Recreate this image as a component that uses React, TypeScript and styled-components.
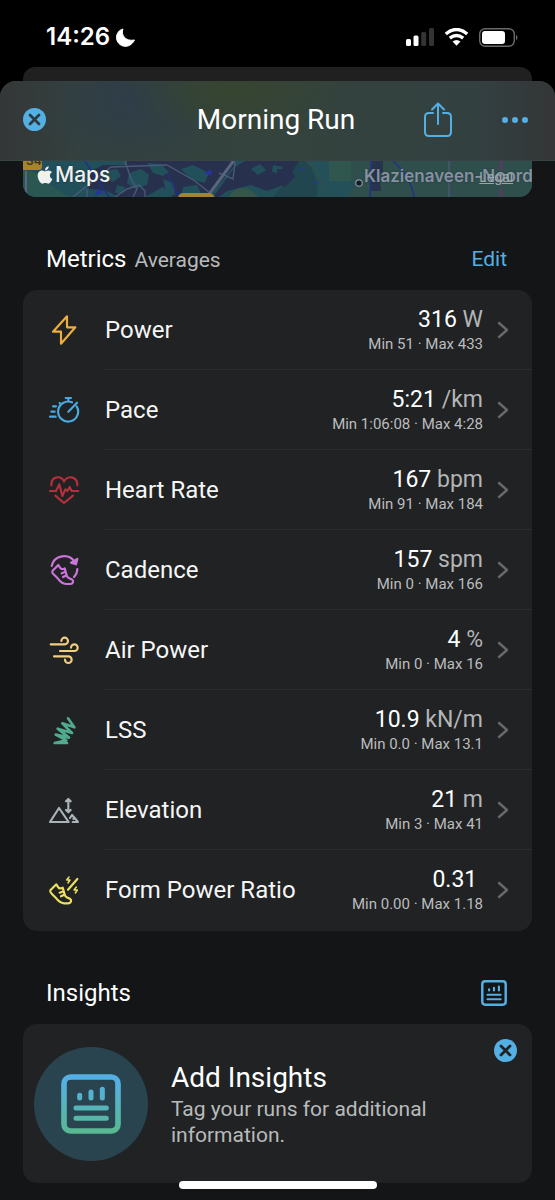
import React from "react";
import styled, { createGlobalStyle } from "styled-components";
import { FaApple } from "react-icons/fa";

const blue = "#54afe3";
const sheetBg = "#131516";
const cardBg = "#202223";
const muted = "#b9babb";

const GlobalStyle = createGlobalStyle`
  * { box-sizing: border-box; }
  body {
    margin: 0;
    background: ${sheetBg};
    color: #fff;
    font-family: Roboto, "Liberation Sans", sans-serif;
  }
  button { font: inherit; color: inherit; background: none; border: 0; padding: 0; cursor: pointer; }
  a { color: inherit; text-decoration: none; }
  h1, h2, h3, p, ul { margin: 0; padding: 0; font-weight: 400; }
  svg { display: block; flex: none; }
`;

const Top = styled.div`
  background: #000;
`;

const StatusBar = styled.div`
  height: 67px;
  padding: 7px 37px 0 46px;
  display: flex;
  align-items: center;
  justify-content: space-between;
  font: 600 24px/30px Inter, sans-serif;
`;

const StatusGroup = styled.div<{ $gap: number }>`
  display: flex;
  align-items: center;
  gap: ${(p) => p.$gap}px;
`;

const BackSheet = styled.div`
  height: 14px;
  margin: 0 23px;
  border-radius: 12px 12px 0 0;
  background: #202020;
`;

const Header = styled.header`
  height: 80px;
  padding: 0 26px 2px 23px;
  display: grid;
  grid-template-columns: 1fr auto 1fr;
  align-items: center;
  border-radius: 16px 16px 0 0;
  border-bottom: 1px solid #3a4343;
  background:
    linear-gradient(90deg, #343737 0%, transparent 14%, transparent 86%, #343637 100%),
    radial-gradient(ellipse 110px 50px at 42% 10%, #36452f 0%, transparent 100%),
    radial-gradient(ellipse 100px 70px at 24% 25%, #2e3d49 0%, transparent 100%),
    linear-gradient(90deg, #33403f 0%, #34433d 50%, #323f42 100%);
`;

const Title = styled.h1`
  font-size: 28px;
  line-height: 36px;
`;

const Actions = styled.div`
  display: flex;
  align-items: center;
  justify-content: flex-end;
  gap: 47px;
`;

const IconButton = styled.button`
  display: flex;
  justify-self: start;
  color: ${blue};
`;

const MapStrip = styled.div`
  position: relative;
  height: 36px;
  margin: 0 23px;
  overflow: hidden;
  border-radius: 0 0 13px 13px;
`;

const MapBrand = styled.div`
  position: absolute;
  top: 0;
  left: 12px;
  display: flex;
  align-items: center;
  color: #f0f2f2;
  font: 500 21px/28px Inter, sans-serif;
  text-shadow: 0 0 2px #1c2a33;
`;

const MapPlace = styled.div`
  position: absolute;
  top: 3px;
  left: 341px;
  color: #8592a2;
  font: 600 17px/24px Inter, sans-serif;
  white-space: nowrap;
  text-shadow: 0 0 2px #26343c;
`;

const MapLegal = styled.a`
  position: absolute;
  top: 7px;
  right: 19px;
  color: #9aa5a8;
  font: 500 13px/18px Inter, sans-serif;
  && { text-decoration: underline; }
`;

const Section = styled.section`
  padding: 48px 23px 0;
`;

const SectionHead = styled.div`
  height: 28px;
  margin-bottom: 17px;
  padding: 0 25px 0 23px;
  display: flex;
  align-items: center;
  justify-content: space-between;
`;

const SectionTitle = styled.h2`
  font-size: 24px;
  line-height: 28px;
`;

const Sub = styled.span`
  margin-left: 8px;
  font-size: 21px;
  color: ${muted};
`;

const Edit = styled.button`
  font-size: 21px;
  line-height: 28px;
  color: ${blue};
`;

const Card = styled.div`
  background: ${cardBg};
  border-radius: 14px;
  overflow: hidden;
`;

const MetricList = styled.ul`
  list-style: none;
  padding-bottom: 1px;
`;

const Row = styled.a`
  display: flex;
  align-items: center;
  gap: 25px;
  padding-left: 25px;
`;

const RowBody = styled.div<{ $last: boolean }>`
  flex: 1;
  height: 80px;
  padding-right: 23px;
  display: flex;
  align-items: center;
  box-shadow: ${(p) => (p.$last ? "none" : "inset 0 -1px #2c2e2f")};
`;

const Name = styled.span`
  flex: 1;
  font-size: 24px;
  line-height: 28px;
  color: #f6f6f6;
`;

const Values = styled.div`
  margin-right: 14px;
  text-align: right;
  font-size: 23px;
  line-height: 28px;
`;

const Unit = styled.span`
  color: #b4b5b6;
`;

const Range = styled.div`
  font-size: 15px;
  line-height: 20px;
  color: #bcbdbe;
`;

const InsightCard = styled(Card)`
  min-height: 159px;
  padding: 0 15px 0 11px;
  display: flex;
  align-items: center;
  gap: 23px;
`;

const Disc = styled.div`
  width: 114px;
  height: 114px;
  flex: none;
  display: grid;
  place-items: center;
  border-radius: 50%;
  background: #29444f;
`;

const InsightText = styled.div`
  flex: 1;
`;

const InsightTitle = styled.h3`
  font-size: 28px;
  line-height: 36px;
`;

const InsightCopy = styled.p`
  max-width: 280px;
  font-size: 21px;
  line-height: 26px;
  color: ${muted};
`;

const Dismiss = styled(IconButton)`
  align-self: flex-start;
  margin-top: 15px;
`;

const Page = styled.main`
  padding-bottom: 17px;
`;

const HomeIndicator = styled.div`
  position: fixed;
  bottom: 11px;
  left: 50%;
  width: 198px;
  height: 8px;
  margin-left: -99px;
  border-radius: 4px;
  background: #fff;
`;

const CloseIcon = ({ cross }: { cross: string }) => (
  <svg width="23" height="23" viewBox="0 0 23 23" aria-hidden="true">
    <circle cx="11.5" cy="11.5" r="11.5" fill={blue} />
    <path d="M7 7l9 9M16 7l-9 9" stroke={cross} strokeWidth="2.8" strokeLinecap="round" />
  </svg>
);

const ReportIcon = ({ size, paint }: { size: number; paint: string }) => (
  <svg width={size} height={size} viewBox="0 0 180 180" fill="none" aria-hidden="true">
    <defs>
      <linearGradient id="report" gradientUnits="userSpaceOnUse" x1="0" y1="0" x2="0" y2="180">
        <stop offset="0.1" stopColor="#54b0e4" />
        <stop offset="1" stopColor="#58b88e" />
      </linearGradient>
    </defs>
    <g stroke={paint} strokeWidth="15" strokeLinecap="round">
      <rect x="9" y="9" width="162" height="162" rx="20" strokeWidth="17" />
      <path d="M56 64v8M90 54v18M124 46v26M45 102h91M45 133h91" />
    </g>
  </svg>
);

const SHOE =
  "M31 33 L13 51 Q11 56 17 61 L29 73 Q41 89 54 90 H66 Q77 89 75 80 Q73 75 64 73 Q58 71 56 64 L50 43 Q41 48 36 41 Z M49 55 L41 58 M53 65 L45 69";

const metricIcons: Record<string, { color: string; art: React.ReactNode }> = {
  Power: { color: "#eead3f", art: <path d="M57 7 L15 53 H39 V89 L82 40 H57 Z" /> },
  Pace: {
    color: "#4aa9e0",
    art: (
      <path d="M53 12h16M61 12v10M61 53L87 26M35 27l4 4M72 25A30 30 0 1 0 86 37M15 37h9M10 53h10M6 68h17" />
    ),
  },
  "Heart Rate": {
    color: "#b5303a",
    art: (
      <path d="M10 34C10 4 40 4 48 23C56 4 88 4 88 34M6 51H24L34 31L43 66L52 46L58 51L65 39L71 51H91M22 65L48 87L75 65" />
    ),
  },
  Cadence: {
    color: "#cb75da",
    art: (
      <>
        <path d="M11 36A38 38 0 0 1 80 24" />
        <path d="M88 15L84 31L69 26Z" fill="#cb75da" />
        <path d="M88 45Q88 58 78 69" />
        <path d={SHOE} />
      </>
    ),
  },
  "Air Power": {
    color: "#f3cd83",
    art: (
      <path d="M8 31H50a10 10 0 1 0-10-10M36 51H79a10 10 0 1 0-10-10M18 67H61a10 10 0 1 1-10 10" />
    ),
  },
  LSS: {
    color: "#50aa8b",
    art: (
      <path strokeWidth="8" d="M57 87H20L55 79L23 62L63 71L29 44L72 57L43 28L79 40L60 13" />
    ),
  },
  Elevation: {
    color: "#a9b4b9",
    art: (
      <path d="M33 42L6 84H62ZM66 72L72 63L90 84H74M76 75L82 73M61 18V51M54 22L61 15L68 22M54 48L61 55L68 48" />
    ),
  },
  "Form Power Ratio": {
    color: "#ecdf63",
    art: (
      <>
        <path d={SHOE} transform="translate(-6 -2)" />
        <path d="M88 15L60 47" />
        <path strokeWidth="4.5" d="M63 9L56 18H66L60 27M85 39L78 48H88L82 57" />
      </>
    ),
  },
};

const MetricIcon = ({ name }: { name: string }) => {
  const { color, art } = metricIcons[name];
  return (
    <svg width="32" height="32" viewBox="0 0 96 96" fill="none" aria-hidden="true">
      <g stroke={color} strokeWidth="6.5" strokeLinecap="round" strokeLinejoin="round">
        {art}
      </g>
    </svg>
  );
};

const metrics = [
  { name: "Power", value: "316", unit: "W", range: "Min 51 · Max 433" },
  { name: "Pace", value: "5:21", unit: "/km", range: "Min 1:06:08 · Max 4:28" },
  { name: "Heart Rate", value: "167", unit: "bpm", range: "Min 91 · Max 184" },
  { name: "Cadence", value: "157", unit: "spm", range: "Min 0 · Max 166" },
  { name: "Air Power", value: "4", unit: "%", range: "Min 0 · Max 16" },
  { name: "LSS", value: "10.9", unit: "kN/m", range: "Min 0.0 · Max 13.1" },
  { name: "Elevation", value: "21", unit: "m", range: "Min 3 · Max 41" },
  { name: "Form Power Ratio", value: "0.31", unit: "", range: "Min 0.00 · Max 1.18" },
];

const MapArt = () => (
  <svg width="100%" height="36" viewBox="0 0 509 36" preserveAspectRatio="xMinYMin slice" aria-hidden="true">
    <rect width="509" height="36" fill="#21505a" />
    <path d="M0 8Q14 10 24 22L46 36H0Z" fill="#2a5752" />
    <path d="M64 12L80 4H104V0H206L212 4L190 30L176 36H150L140 26L122 36H96L84 30L66 28Z" fill="#27314d" />
    <path d="M212 6L222 0H276L278 10L262 14L260 24L244 30L228 24L204 30L196 36H190Z" fill="#27314d" />
    <path d="M82 10l12-2 4 7-8 6-10-4zM106 12l12-4 8 6-2 10-12 4-8-6zM124 2l14 1 8 8-6 4-10-3zM140 18l10 4 2 12h-8zM158 8l12-4 16 8-4 10-14-4zM94 24l8 2-2 6-8 0zM160 26l14-2 4 8-8 4h-12zM228 8l9-5 6 6-8 5zM250 4l10 2-2 7-9-2z" fill="#21505a" />
    <path d="M206 36Q212 24 226 28L236 36Z" fill="#365649" />
    <path d="M276 0H284Q296 16 294 36H250L262 22Z" fill="#224650" />
    <path d="M254 8H268L272 16L262 26L254 22Z" fill="#28304f" />
    <path d="M282 0H509V36H300Q298 14 282 0Z" fill="#2e4f4b" />
    <path d="M286 0H306V20H334L324 36H302Q300 14 286 0Z" fill="#245159" />
    <path d="M306 0H328V20H306Z" fill="#2f574e" />
    <path d="M349 0H360V12H356L358 30H348Z" fill="#28334e" />
    <g fill="none" stroke="#4b5878" strokeWidth="1.4">
      <path d="M50 36L88 6L144 4L172 20L192 36M102 0L108 18L114 28L110 36M92 36L104 28L116 24L122 30V36M212 2L210 18L196 12M64 36V28" />
      <path d="M426 0V36" />
    </g>
    <path d="M212 -2L184 36" stroke="#59647f" strokeWidth="3" />
    <path d="M62 0L86 36M144 12L156 36M348 0L347 36M370 0Q388 16 391 36" fill="none" stroke="#242f8c" strokeWidth="1.4" />
    <path d="M182 12l6-3v5zM72 34l4-6 3 4zM276 8h6M290 22h6" fill="#2733a0" stroke="#2733a0" />
    <path d="M3 10V36" stroke="#59647f" strokeWidth="2" />
    <path d="M478 0V36" stroke="#553c61" strokeWidth="3" strokeDasharray="10 4" />
    <rect x="-3" y="-9" width="22" height="18" rx="3" fill="#a4842c" />
    <rect x="155" y="32" width="36" height="12" rx="5" fill="#a4842c" />
    <circle cx="336" cy="22" r="3.2" fill="#15191f" stroke="#8592a2" strokeWidth="1.2" />
    <text x="3" y="4" fontFamily="Inter, sans-serif" fontSize="12" fontWeight="600" fill="#3b3423">
      34
    </text>
  </svg>
);

export default function App() {
  return (
    <>
      <GlobalStyle />
      <Top>
        <StatusBar>
          <StatusGroup $gap={6}>
            <span>14:26</span>
            <svg width="20" height="19" viewBox="0 0 20 19" aria-label="Do not disturb">
              <path d="M7 1C4.500 6 9 14 18.500 12C16 17 12 18.500 9 18.300C4 18 0.500 14 0.500 9.500C0.500 5.500 3 2 7 1Z" fill="#fff" stroke="#fff" strokeLinejoin="round" />
            </svg>
          </StatusGroup>
          <StatusGroup $gap={10}>
            <svg width="28" height="18" viewBox="0 0 28 18" aria-label="Signal">
              <rect x="0" y="11" width="5" height="7" rx="1.5" fill="#fff" />
              <rect x="7.500" y="7.500" width="5" height="10.500" rx="1.500" fill="#fff" />
              <rect x="15.200" y="4" width="5" height="14" rx="1.500" fill="#333" />
              <rect x="23" y="0" width="5" height="18" rx="1.500" fill="#333" />
            </svg>
            <svg width="25" height="18" viewBox="0 0 25 18" fill="none" aria-label="Wi-Fi">
              <path d="M1.800 6Q12.500 -3 23.200 6M5.800 10.200Q12.500 5 19.200 10.200" stroke="#fff" strokeWidth="3.400" />
              <path d="M8.500 13.500Q12.500 10.500 16.500 13.500L12.500 17.800Z" fill="#fff" />
            </svg>
            <svg width="39" height="19" viewBox="0 0 39 19" fill="none" aria-label="Battery">
              <rect x="0.700" y="0.700" width="34.600" height="17.600" rx="5.500" stroke="#6a6a6a" strokeWidth="1.400" />
              <rect x="3" y="3" width="23" height="13" rx="3" fill="#fff" />
              <path d="M37 6.500Q40 9.500 37 12.500Z" fill="#6a6a6a" />
            </svg>
          </StatusGroup>
        </StatusBar>
        <BackSheet />
        <Header>
          <IconButton aria-label="Close">
            <CloseIcon cross="#2b3a40" />
          </IconButton>
          <Title>Morning Run</Title>
          <Actions>
            <IconButton aria-label="Share">
              <svg width="28" height="35" viewBox="0 0 28 35" fill="none" stroke={blue} strokeWidth="2" strokeLinecap="round" strokeLinejoin="round">
                <path d="M9 11H5Q1 11 1 15V30Q1 34 5 34H23Q27 34 27 30V15Q27 11 23 11H19M14 22V1.500M8 7.500L14 1.500L20 7.500" />
              </svg>
            </IconButton>
            <IconButton aria-label="More">
              <svg width="30" height="8" viewBox="0 0 30 8" fill={blue}>
                <circle cx="6" cy="4" r="3" />
                <circle cx="16" cy="4" r="3" />
                <circle cx="26" cy="4" r="3" />
              </svg>
            </IconButton>
          </Actions>
        </Header>
      </Top>
      <Page>
        <MapStrip>
          <MapArt />
          <MapBrand>
            <FaApple size={20} aria-hidden="true" />
            Maps
          </MapBrand>
          <MapPlace>Klazienaveen-Noord</MapPlace>
          <MapLegal href="#legal">Legal</MapLegal>
        </MapStrip>

        <Section>
          <SectionHead>
            <SectionTitle>
              Metrics<Sub>Averages</Sub>
            </SectionTitle>
            <Edit>Edit</Edit>
          </SectionHead>
          <Card>
            <MetricList>
              {metrics.map((m, i) => (
                <li key={m.name}>
                  <Row href={`#metric-${i}`}>
                    <MetricIcon name={m.name} />
                    <RowBody $last={i === metrics.length - 1}>
                      <Name>{m.name}</Name>
                      <Values>
                        {m.value}
                        <Unit>{"\u00a0" + m.unit}</Unit>
                        <Range>{m.range}</Range>
                      </Values>
                      <svg width="12" height="18" viewBox="0 0 12 18" fill="none" aria-hidden="true">
                        <path d="M2 2L10 9L2 16" stroke="#66686a" strokeWidth="2.400" strokeLinecap="round" strokeLinejoin="round" />
                      </svg>
                    </RowBody>
                  </Row>
                </li>
              ))}
            </MetricList>
          </Card>
        </Section>

        <Section>
          <SectionHead>
            <SectionTitle>Insights</SectionTitle>
            <IconButton aria-label="Insights list">
              <ReportIcon size={26} paint={blue} />
            </IconButton>
          </SectionHead>
          <InsightCard>
            <Disc>
              <ReportIcon size={60} paint="url(#report)" />
            </Disc>
            <InsightText>
              <InsightTitle>Add Insights</InsightTitle>
              <InsightCopy>Tag your runs for additional information.</InsightCopy>
            </InsightText>
            <Dismiss aria-label="Dismiss">
              <CloseIcon cross={cardBg} />
            </Dismiss>
          </InsightCard>
        </Section>
      </Page>
      <HomeIndicator />
    </>
  );
}
